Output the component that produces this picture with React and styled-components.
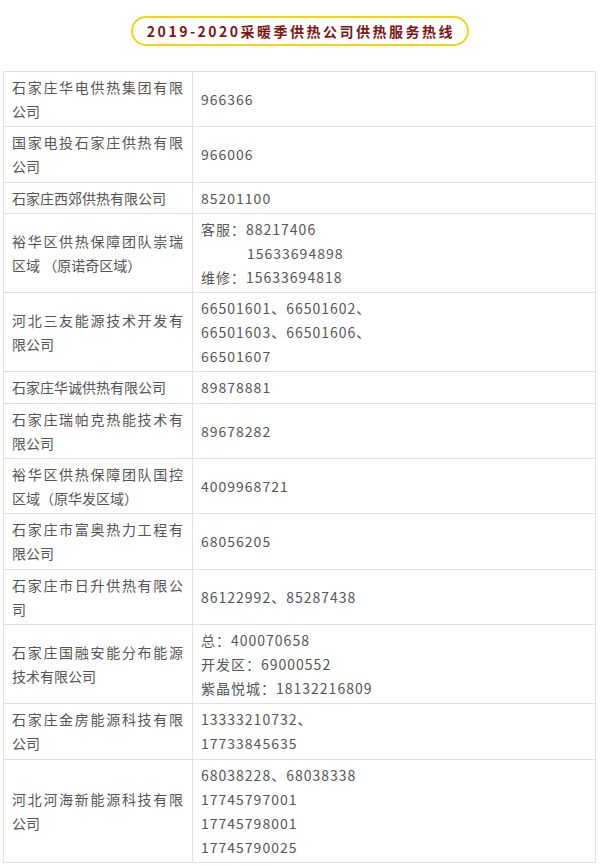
import styled, { createGlobalStyle } from 'styled-components';

const GlobalStyle = createGlobalStyle`
  body {
    margin: 0;
    background: #ffffff;
    font-family: "Noto Sans CJK SC", "Microsoft YaHei", sans-serif;
  }
`

const Page = styled.div`
  width: 600px;
  padding-top: 16px;
`

const TitleRow = styled.div`
  display: flex;
  justify-content: center;
  padding-left: 0;
  margin-bottom: 25px;
`

const Pill = styled.div`
  box-sizing: border-box;
  height: 30px;
  padding: 0 12px 0 14px;
  border: 2px solid #f7d117;
  border-radius: 15px;
  display: flex;
  align-items: center;
  color: #7d1414;
  font-weight: 700;
  font-size: 14px;
  letter-spacing: 2.5px;
`

const Table = styled.table`
  margin-left: 3px;
  width: 593px;
  border-collapse: collapse;
  table-layout: fixed;
  color: #555555;
  font-size: 14px;
  line-height: 24px;
`

const Cell = styled.td`
  border: 1px solid #e1e1e1;
  padding: 3px 9px 3.3px 8px;
  vertical-align: middle;
  letter-spacing: ${p => (p.$phone ? '1px' : '0')};
`

// lines that wrap in the original are spread to the full cell width
const Line = styled.span`
  display: block;
  text-align: ${p => (p.$full ? 'justify' : 'left')};
  text-align-last: ${p => (p.$full ? 'justify' : 'left')};
  padding-left: ${p => p.$indent || 0}px;
`

const rows = [
  { name: ['石家庄华电供热集团有限', '公司'], tel: ['966366'] },
  { name: ['国家电投石家庄供热有限', '公司'], tel: ['966006'] },
  { name: ['石家庄西郊供热有限公司'], tel: ['85201100'] },
  {
    name: ['裕华区供热保障团队崇瑞', '区域 （原诺奇区域）'],
    tel: ['客服：88217406', { t: '15633694898', indent: 46 }, '维修：15633694818'],
  },
  {
    name: ['河北三友能源技术开发有', '限公司'],
    tel: ['66501601、66501602、', '66501603、66501606、', '66501607'],
  },
  { name: ['石家庄华诚供热有限公司'], tel: ['89878881'] },
  { name: ['石家庄瑞帕克热能技术有', '限公司'], tel: ['89678282'] },
  { name: ['裕华区供热保障团队国控', '区域（原华发区域）'], tel: ['4009968721'] },
  { name: ['石家庄市富奥热力工程有', '限公司'], tel: ['68056205'] },
  { name: ['石家庄市日升供热有限公', '司'], tel: ['86122992、85287438'] },
  {
    name: ['石家庄国融安能分布能源', '技术有限公司'],
    tel: ['总：400070658', '开发区：69000552', '紫晶悦城：18132216809'],
  },
  { name: ['石家庄金房能源科技有限', '公司'], tel: ['13333210732、', '17733845635'] },
  {
    name: ['河北河海新能源科技有限', '公司'],
    tel: ['68038228、68038338', '17745797001', '17745798001', '17745790025'],
  },
]

function App() {
  return (
    <Page>
      <GlobalStyle />
      <TitleRow>
        <Pill>2019-2020采暖季供热公司供热服务热线</Pill>
      </TitleRow>
      <Table>
        <colgroup>
          <col style={{ width: 189 }} />
          <col />
        </colgroup>
        <tbody>
          {rows.map((r, i) => (
            <tr key={i}>
              <Cell>
                {r.name.map((n, j) => (
                  <Line key={j} $full={j < r.name.length - 1}>{n}</Line>
                ))}
              </Cell>
              <Cell $phone>
                {r.tel.map((t, j) =>
                  typeof t === 'string' ? (
                    <Line key={j}>{t}</Line>
                  ) : (
                    <Line key={j} $indent={t.indent}>{t.t}</Line>
                  )
                )}
              </Cell>
            </tr>
          ))}
        </tbody>
      </Table>
    </Page>
  );
}

export default App;
